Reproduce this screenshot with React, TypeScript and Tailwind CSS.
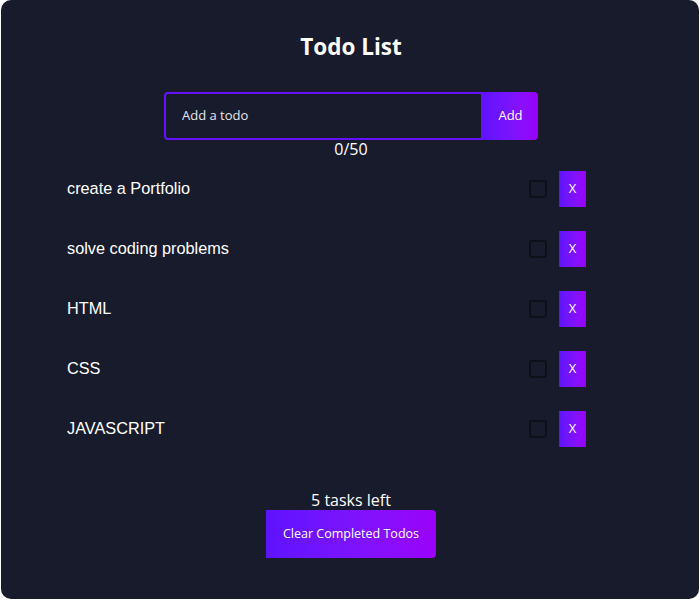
const TODOS = ['create a Portfolio', 'solve coding problems', 'HTML', 'CSS', 'JAVASCRIPT'];

const UI_FONT = "font-['Trebuchet_MS','Open_Sans',sans-serif]";

export default function App() {
  return (
    <div className="bg-white w-[700px] h-[603px]">
      <div className={`ml-px w-[698px] h-[599px] rounded-[10px] bg-[#181b2b] flex flex-col items-center text-white ${UI_FONT}`}>
        <h1 className="pt-[31px] ml-[2px] text-[22.5px] leading-8 font-bold">Todo List</h1>

        {/* Input */}
        <form className="mt-[29px] ml-[2px] flex h-12 w-[374px]" onSubmit={(e) => e.preventDefault()}>
          <input
            placeholder="Add a todo"
            className="flex-1 min-w-0 bg-transparent border-2 border-[#6511ff] rounded-l-[4px] pl-4 text-[13px] text-white placeholder:text-[#e6e6ee] outline-none"
          />
          <button className="w-[55px] rounded-r-[4px] bg-gradient-to-r from-[#5e12ff] to-[#9a00fa] text-[13px] text-white">
            Add
          </button>
        </form>
        <p className="ml-[2px] text-base leading-[18px]">0/50</p>

        {/* List */}
        <ul className="mt-[13px] flex flex-col gap-6 self-start ml-[66px] w-[519px]">
          {TODOS.map((todo) => (
            <li key={todo} className="flex h-9 items-center justify-between">
              <span className="mb-[2px] font-['Liberation_Sans',Arial,sans-serif] text-[16.3px]">{todo}</span>
              <div className="flex items-center gap-3">
                <div className="w-[18px] h-[18px] rounded-[3px] border-2 border-[#0e1019]" />
                <button className="w-[27px] h-9 bg-gradient-to-r from-[#5e12ff] to-[#9a00fa] text-[13px] text-white">
                  X
                </button>
              </div>
            </li>
          ))}
        </ul>

        {/* Footer */}
        <p className="mt-11 ml-[2px] text-base leading-[18px]">5 tasks left</p>
        <button className="mt-px ml-[2px] w-[170px] h-12 rounded-r-[4px] bg-gradient-to-r from-[#5e12ff] to-[#9a00fa] text-[12.5px] text-white">
          Clear Completed Todos
        </button>
      </div>
    </div>
  );
}
